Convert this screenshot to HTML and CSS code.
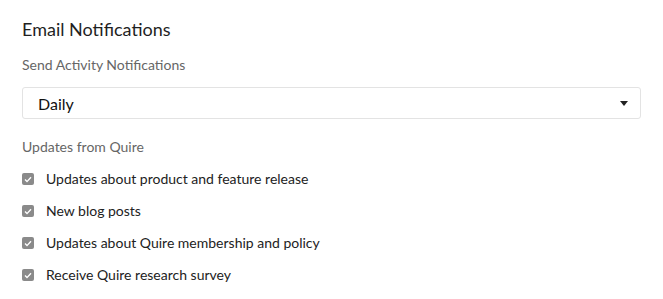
FILE: index.html
```html
<!DOCTYPE html>
<html>
<head>
<meta charset="utf-8">
<link rel="stylesheet" href="styles.css">
</head>
<body>
<div class="panel">
  <h2 class="title">Email Notifications</h2>
  <div class="label">Send Activity Notifications</div>
  <div class="select">
    <span class="select-value">Daily</span>
    <svg class="caret" width="8" height="5" viewBox="0 0 8 5"><path d="M0 0H8L4 5Z" fill="#222"/></svg>
  </div>
  <div class="label label-updates">Updates from Quire</div>
  <ul class="checks">
    <li class="check"><span class="box"><svg width="8" height="7" viewBox="0 0 8 7"><path d="M1 3.6L3 5.6L7 1.2" fill="none" stroke="#fff" stroke-width="1.4"/></svg></span>Updates about product and feature release</li>
    <li class="check"><span class="box"><svg width="8" height="7" viewBox="0 0 8 7"><path d="M1 3.6L3 5.6L7 1.2" fill="none" stroke="#fff" stroke-width="1.4"/></svg></span>New blog posts</li>
    <li class="check"><span class="box"><svg width="8" height="7" viewBox="0 0 8 7"><path d="M1 3.6L3 5.6L7 1.2" fill="none" stroke="#fff" stroke-width="1.4"/></svg></span>Updates about Quire membership and policy</li>
    <li class="check"><span class="box"><svg width="8" height="7" viewBox="0 0 8 7"><path d="M1 3.6L3 5.6L7 1.2" fill="none" stroke="#fff" stroke-width="1.4"/></svg></span>Receive Quire research survey</li>
  </ul>
</div>
</body>
</html>
```

FILE: styles.css
```css
html, body {
  margin: 0;
  padding: 0;
  background: #fff;
}
body {
  font-family: Lato, "Open Sans", sans-serif;
  color: #222;
}
.panel {
  padding: 17px 22px 0 22px;
  width: 619px;
}
.title {
  margin: 0;
  font-size: 18px;
  font-weight: 400;
  line-height: 24px;
  color: #1f1f1f;
}
.label {
  margin-top: 15px;
  font-size: 14px;
  line-height: 18px;
  color: #666;
}
.select {
  margin-top: 13px;
  height: 30px;
  border: 1px solid #e3e3e3;
  border-radius: 3px;
  display: flex;
  align-items: center;
  justify-content: space-between;
  padding: 0 12px 0 15px;
}
.select-value {
  font-size: 16px;
  color: #111;
}
.caret {
  display: block;
}
.label-updates {
  margin-top: 19px;
}
.checks {
  list-style: none;
  margin: 14px 0 0 0;
  padding: 0;
  display: flex;
  flex-direction: column;
  gap: 14px;
}
.check {
  display: flex;
  align-items: center;
  font-size: 14px;
  line-height: 18px;
  color: #222;
}
.box {
  width: 12px;
  height: 12px;
  border-radius: 2px;
  background: #8a8a8a;
  display: flex;
  align-items: center;
  justify-content: center;
  margin-right: 12px;
  flex: none;
}
.box svg {
  display: block;
}
```
